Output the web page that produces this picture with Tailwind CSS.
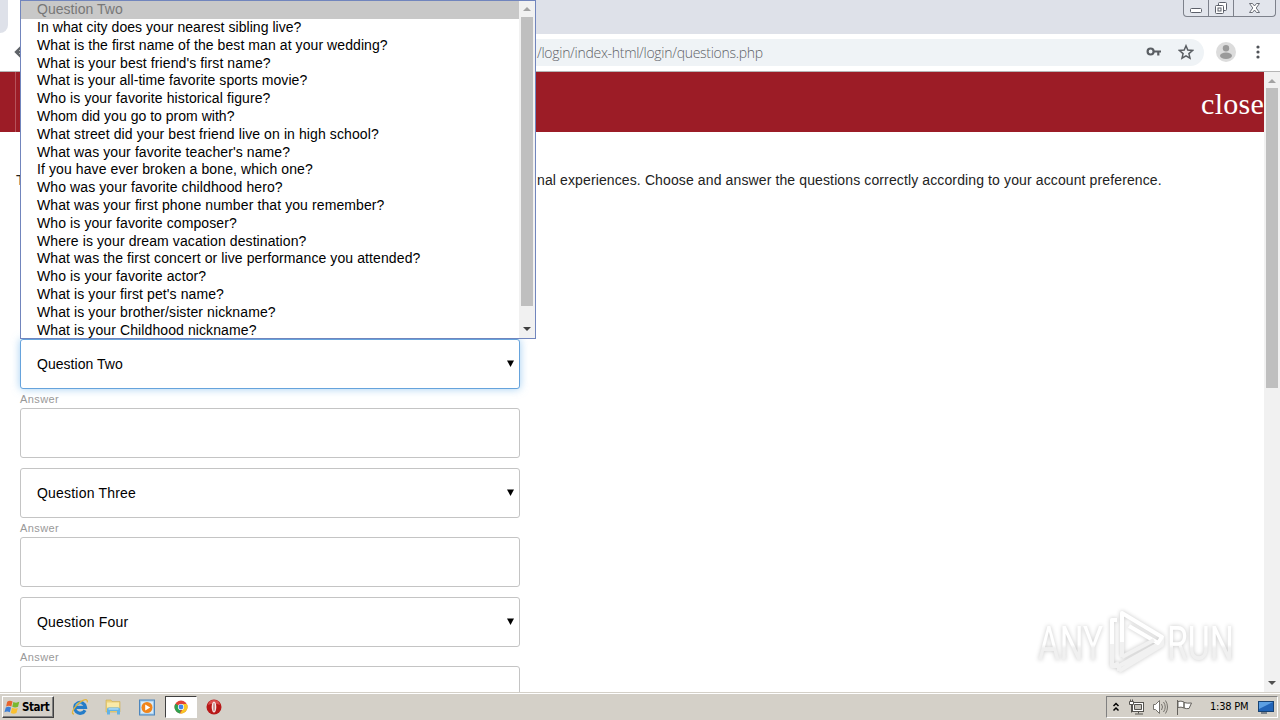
<!DOCTYPE html>
<html lang="en">
<head>
<meta charset="utf-8">
<title>Security questions</title>
<script src="https://cdn.jsdelivr.net/npm/@tailwindcss/browser@4"></script>
</head>
<body class="relative flex h-[720px] w-[1280px] flex-col overflow-hidden bg-white font-['Liberation_Sans',Arial,sans-serif] text-[14px] text-black">

<!-- Tab strip -->
<div class="flex h-[34px] shrink-0 justify-between bg-white">
  <div class="h-[33px] w-2 rounded-br-lg bg-[#dee1e9]"></div>
  <div class="flex w-[780px] justify-end bg-[#dee1e9] pr-1">
    <div class="flex h-[17px] w-[93px] rounded-b-[4px] border border-t-0 border-[#7d818b] bg-[#e2e5ec]">
      <div class="flex w-[25px] items-center justify-center border-r border-[#7d818b]">
        <svg width="13" height="13" fill="#fff" stroke="#5c606a"><rect x=".5" y="6.500" width="11" height="4" rx="1"/></svg>
      </div>
      <div class="flex w-[25px] items-center justify-center border-r border-[#7d818b]">
        <svg width="14" height="14" fill="#fff" stroke="#5c606a"><rect x="4.500" y="1.500" width="8" height="8" rx="1"/><rect x="1.500" y="4.500" width="8" height="8" rx="1"/><rect x="4" y="7" width="3" height="3"/></svg>
      </div>
      <div class="flex flex-1 items-center justify-center">
        <svg width="13" height="12" fill="#fff" stroke="#5c606a" stroke-width=".9"><path d="M1.500 1.500h3l2 2.500 2-2.500h3L8.200 6l3.300 4.500h-3l-2-2.500-2 2.500h-3L4.800 6z"/></svg>
      </div>
    </div>
  </div>
</div>

<!-- Address bar -->
<div class="flex h-[38px] shrink-0 items-center border-b border-[#b5b5b5] bg-white pb-px">
  <svg class="ml-[14px] shrink-0" width="14" height="14" fill="none" stroke="#5f6368" stroke-width="2.400"><path d="M13 7H3M7 2 2 7l5 5"/></svg>
  <div class="ml-5 flex h-[27px] w-[1156px] items-center rounded-full bg-[#eff3f6] pl-[489px] pr-[10px]">
    <span class="whitespace-nowrap font-['Open_Sans',sans-serif] text-[14px] font-light tracking-[-0.29px] text-[#5f6368]">/login/index-html/login/questions.php</span>
    <svg class="ml-auto" width="16" height="12" fill="none" stroke="#5a5e63" stroke-width="2.200"><circle cx="4.600" cy="5.500" r="3"/><path d="M7.500 5.500H15M12.300 5.500v4"/></svg>
    <svg class="ml-4" width="16" height="16" fill="none" stroke="#5a5e63" stroke-width="1.500"><path d="m8 1.800 1.800 4.300 4.700.4-3.600 3.100 1.100 4.600L8 11.800l-4 2.400 1.100-4.600-3.600-3.100 4.700-.4z"/></svg>
  </div>
  <svg class="ml-3" width="20" height="20"><circle cx="10" cy="10" r="10" fill="#dcdcdc"/><circle cx="10" cy="6.200" r="3.200" fill="#9a9a9a"/><ellipse cx="10" cy="13.800" rx="6" ry="3.200" fill="#9a9a9a"/></svg>
  <svg class="ml-5" width="4" height="16" fill="#505358"><circle cx="2" cy="3" r="1.600"/><circle cx="2" cy="8" r="1.600"/><circle cx="2" cy="13" r="1.600"/></svg>
</div>

<!-- Page -->
<div class="flex h-[620px] shrink-0">
  <div class="h-full w-[1264px] overflow-hidden">
    <div class="flex h-[60px] bg-[#9c1c26] pl-[15px]">
      <div class="w-px bg-[#b5525a]"></div>
      <span class="ml-auto mt-[14px] font-['Liberation_Serif',serif] text-[30px] leading-9 tracking-[0.25px] text-white">close</span>
    </div>
    <div class="flex h-[207px] pl-4 pt-[38px] leading-5 text-[#222]">
      <span class="w-[521px]">T</span>
      <span class="whitespace-nowrap tracking-[0.12px]">nal experiences. Choose and answer the questions correctly according to your account preference.</span>
    </div>
    <div class="ml-5 flex w-[500px] flex-col tracking-[0.12px]">
      <div class="flex h-[50px] items-center justify-between rounded-[3px] border border-[#66a3dc] bg-white pl-4 pr-[5px] shadow-[0_0_8px_rgba(102,175,233,0.6)]"><span class="tracking-[0.04px]">Question Two</span><svg class="-mt-px" width="7" height="7"><path d="M0 .5h7L3.500 7z"/></svg></div>
      <div class="h-[19px] pt-px text-[11px] leading-[19px] tracking-[0.42px] text-[#999]">Answer</div>
      <div class="mb-[10px] h-[50px] rounded-[3px] border border-[#c4c4c4]"></div>
      <div class="flex h-[50px] items-center justify-between rounded-[3px] border border-[#c4c4c4] pl-4 pr-[5px]"><span class="tracking-[0.2px]">Question Three</span><svg class="-mt-px" width="7" height="7"><path d="M0 .5h7L3.500 7z"/></svg></div>
      <div class="h-[19px] pt-px text-[11px] leading-[19px] tracking-[0.42px] text-[#999]">Answer</div>
      <div class="mb-[10px] h-[50px] rounded-[3px] border border-[#c4c4c4]"></div>
      <div class="flex h-[50px] items-center justify-between rounded-[3px] border border-[#c4c4c4] pl-4 pr-[5px]"><span class="tracking-[0.2px]">Question Four</span><svg class="-mt-px" width="7" height="7"><path d="M0 .5h7L3.500 7z"/></svg></div>
      <div class="h-[19px] pt-px text-[11px] leading-[19px] tracking-[0.42px] text-[#999]">Answer</div>
      <div class="h-[50px] rounded-[3px] border border-[#c4c4c4]"></div>
    </div>
  </div>
  <div class="flex w-4 flex-col items-center bg-[#f1f1f1]">
    <div class="flex h-4 items-center pt-px"><svg width="8" height="4" fill="#a3a3a3"><path d="M4 0l4 4H0z"/></svg></div>
    <div class="h-[300px] w-3 bg-[#bfbfbf]"></div>
    <div class="mt-auto flex h-[18px] items-center"><svg width="8" height="4" fill="#505050"><path d="M0 0h8L4 4z"/></svg></div>
  </div>
</div>

<!-- Taskbar -->
<div class="flex h-7 shrink-0 items-center border-t border-[#d4d0c8] bg-[#d4d0c8] pl-[2px] pr-[2px] shadow-[inset_0_1px_0_#fff]">
  <div class="mt-px flex h-[22px] w-[52px] items-center gap-px border border-b-[#404040] border-l-white border-r-[#404040] border-t-white pl-px shadow-[inset_-1px_-1px_0_#808080]">
    <svg width="17" height="17" viewBox="0 0 16 16"><path fill="#e8642c" d="M3 2.500Q5.500.8 8 2.400L6.900 7Q4.500 5.600 2 7z"/><path fill="#79b82f" d="M8.800 2.800q2.600 1.300 5.600-.1L13.200 7.400q-2.800 1.300-5.400 0z"/><path fill="#3d7fd6" d="M1.700 7.900q2.500-1.400 4.900 0L5.500 12.500Q3 11.200.4 12.500z"/><path fill="#fac030" d="M7.500 8.300q2.700 1.300 5.500.1l-1.300 4.800q-2.700 1.300-5.300-.1z"/></svg>
    <span class="mt-px font-['DejaVu_Sans_Condensed','DejaVu_Sans',sans-serif] text-[11.500px] font-bold tracking-[-0.45px]">Start</span>
  </div>
  <svg class="ml-[17px] mt-px" width="18" height="18" viewBox="0 0 18 18" fill="none"><path stroke="#247cc8" stroke-width="3.200" d="M14 12.200A5.400 5.400 0 1 1 14.500 9.300H5"/><path stroke="#6fc4f6" stroke-width="1.200" d="M4.500 7.500q2-3.500 6-2.500"/><path stroke="#e2b53c" stroke-width="1.300" d="M3 16C-2 16 6 5 12 2.300q5-2 4.300 2"/></svg>
  <svg class="ml-4 mt-px" width="17" height="18" viewBox="0 0 17 18"><path fill="#ecd07a" stroke="#cfae52" stroke-width=".6" d="M1 2h5l1 1.500h8V14H1z"/><path fill="#f9eaa9" d="M2 4.500h12v5H2z"/><path fill="#62b2e6" d="M2 16.500V11.500q0-2 2-2h9q2 0 2 2v5h-3V13H5v3.500z"/><path fill="#b9e2f8" d="M3.500 10.300h10v1.300h-10z"/></svg>
  <svg class="ml-[17px] mt-px" width="16" height="17" viewBox="0 0 16 17"><rect x=".5" y="1" width="15" height="15" fill="#9bc6ea" stroke="#4d86bd"/><rect x="2" y="2.500" width="12" height="12" fill="#d8ebf8"/><circle cx="8" cy="8.500" r="5.500" fill="#f0851b"/><path fill="#fff" d="M6.200 5.500v6l5-3z"/></svg>
  <div class="ml-[10px] mt-px flex h-[22px] w-[32px] items-center justify-center border border-b-white border-l-[#404040] border-r-white border-t-[#404040] bg-white">
    <svg width="14" height="14" viewBox="0 0 14 14"><circle cx="7" cy="7" r="6.500" fill="#e24335"/><path fill="#2da14f" d="M1.400 3.700 7 7l-1 6.400A6.500 6.500 0 0 1 1.400 3.700z"/><path fill="#f8c723" d="M7 4h5.800A6.500 6.500 0 0 1 6 13.400L9.600 8z"/><circle cx="7" cy="7" r="3.100" fill="#fff"/><circle cx="7" cy="7" r="2.400" fill="#4285e8"/></svg>
  </div>
  <svg class="ml-[9px] mt-px" width="16" height="16" viewBox="0 0 16 16"><circle cx="8" cy="8" r="7.500" fill="#b81818"/><path fill="#e86464" d="M2 6q1-5 6-5t6 5Q8 3 2 6z" opacity=".7"/><ellipse cx="8" cy="8" rx="2.300" ry="5.500" fill="#f7e7e7"/><ellipse cx="8" cy="8" rx=".7" ry="4.300" fill="#b87070"/></svg>

  <div class="ml-auto mt-px flex h-[22px] w-[172px] items-center border border-b-white border-l-[#808080] border-r-white border-t-[#808080] pl-[5px]">
    <svg class="-mt-px" width="8" height="10" fill="none" stroke="#000" stroke-width="1.500"><path d="M1.500 4 4 1.500 6.500 4M1.500 8.500 4 6l2.500 2.500"/></svg>
    <svg class="ml-[8px]" width="17" height="17" fill="#fff" stroke="#55534f"><rect x="4.500" y="3.500" width="11" height="9"/><path d="M6.500 5.500h7v5h-7z" fill="#c4c1ba"/><path d="M10.500 12.500v2M7 15h8"/><path d="M1.500 2.500h4v3h-4zM2.500 .5v2M4.500 .5v2M3.500 5.500v8"/></svg>
    <svg class="ml-[7px]" width="17" height="16" fill="#fff" stroke="#75726c"><path d="M1.500 5.500h2l4-4v13l-4-4h-2z"/><path fill="none" d="M9.500 5q2 3 0 6M11.500 3q3.500 5 0 10M13.500 1.500q4 6.500 0 13"/></svg>
    <svg class="ml-[7px]" width="17" height="17" stroke="#65625d" fill="#fff"><path d="M1.500 1v15"/><path d="M2 2.500q3-1 6 .5v6q-3-1.500-6-.5zM8 3.500q3 1 7.500.5l-2.500 5.500q-3 .5-5-.5z"/></svg>
    <span class="ml-[17px] mt-px whitespace-nowrap font-['DejaVu_Sans_Condensed','DejaVu_Sans',sans-serif] text-[11px] tracking-[-0.22px]">1:38 PM</span>
    <svg class="ml-auto mr-[3px]" width="16" height="14"><rect x=".5" y="1.500" width="15" height="10" fill="#2164b8" stroke="#174273"/><path fill="#5b9fe3" d="M1 2h14L1 9z"/><path stroke="#24364c" d="M3 13h6"/></svg>
  </div>
</div>

<!-- Open option list, over the browser chrome -->
<div class="absolute left-5 top-0 flex h-[339px] w-[516px] border border-[#7185bd] bg-white">
  <div class="flex-1 whitespace-nowrap leading-[17.800px] tracking-[0.1px]">
    <div class="h-[18px] bg-[#c8c8c8] pl-4 tracking-[0.04px] text-[#777]">Question Two</div>
    <div class="pl-4 tracking-[0.05px]">In what city does your nearest sibling live?</div>
    <div class="pl-4 tracking-[0.08px]">What is the first name of the best man at your wedding?</div>
    <div class="pl-4">What is your best friend's first name?</div>
    <div class="pl-4 tracking-[0.06px]">What is your all-time favorite sports movie?</div>
    <div class="pl-4">Who is your favorite historical figure?</div>
    <div class="pl-4 tracking-[0.02px]">Whom did you go to prom with?</div>
    <div class="pl-4">What street did your best friend live on in high school?</div>
    <div class="pl-4">What was your favorite teacher's name?</div>
    <div class="pl-4">If you have ever broken a bone, which one?</div>
    <div class="pl-4">Who was your favorite childhood hero?</div>
    <div class="pl-4">What was your first phone number that you remember?</div>
    <div class="pl-4">Who is your favorite composer?</div>
    <div class="pl-4">Where is your dream vacation destination?</div>
    <div class="pl-4">What was the first concert or live performance you attended?</div>
    <div class="pl-4">Who is your favorite actor?</div>
    <div class="pl-4">What is your first pet's name?</div>
    <div class="pl-4">What is your brother/sister nickname?</div>
    <div class="-mb-1 pl-4">What is your Childhood nickname?</div>
  </div>
  <div class="flex w-4 flex-col items-center bg-[#f1f1f1]">
    <div class="flex h-4 items-center"><svg width="8" height="4" fill="#a3a3a3"><path d="M4 0l4 4H0z"/></svg></div>
    <div class="h-[289px] w-3 bg-[#bfbfbf]"></div>
    <div class="mt-auto flex h-[18px] items-center"><svg width="8" height="4" fill="#404040"><path d="M0 0h8L4 4z"/></svg></div>
  </div>
</div>

<!-- Watermark -->
<div class="absolute left-[1036px] top-[604px]">
  <svg width="204" height="74" viewBox="0 0 204 74" class="overflow-visible drop-shadow-[0_0_2px_rgba(0,0,0,0.22)]">
    <defs><linearGradient id="wm" x1="0" y1="0" x2="0" y2="1"><stop offset=".52" stop-color="#fff"/><stop offset=".58" stop-color="#f0f0f0"/></linearGradient></defs>
    <g font-family="Roboto, sans-serif" font-weight="400" font-size="49" fill="url(#wm)">
      <text x="2" y="56" textLength="65" lengthAdjust="spacingAndGlyphs">ANY</text>
      <text x="131" y="56" textLength="67" lengthAdjust="spacingAndGlyphs">RUN</text>
    </g>
    <g fill="none" stroke-width="4" stroke-linejoin="round"><path stroke="#f1f1f1" d="M81 16h-5v46l7-3M83 67l43-26v-7M83 61v6M76 62l7 0 43-24"/><path stroke="#fff" d="M86 52V9l40 24-4 6-29-17M81 16h-5v24"/><path stroke="#f1f1f1" d="M86 53 118 36M86 38v15"/></g>
  </svg>
</div>
</body>
</html>
